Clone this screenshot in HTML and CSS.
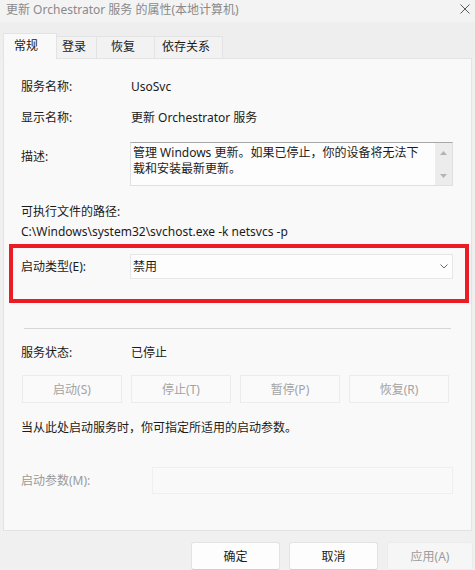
FILE: index.html
```html
<!DOCTYPE html>
<html lang="zh-CN">
<head>
<meta charset="utf-8">
<title>更新 Orchestrator 服务 的属性(本地计算机)</title>
<link rel="stylesheet" href="styles.css">
</head>
<body>
<div class="window">
  <div class="titlebar">
    <span class="title">更新 Orchestrator 服务 的属性(本地计算机)</span>
    <svg class="close" width="10" height="10" viewBox="0 0 10 10"><path d="M0.5 0.5L9.5 9.5M9.5 0.5L0.5 9.5" stroke="#5a5a5a" stroke-width="1" fill="none"/></svg>
  </div>
  <div class="tabstrip">
    <div class="tab active">常规</div>
    <div class="tab t-login">登录</div>
    <div class="tab t-recover">恢复</div>
    <div class="tab t-deps">依存关系</div>
  </div>
  <div class="panel">
    <div class="row r1"><span class="label">服务名称:</span><span class="value">UsoSvc</span></div>
    <div class="row r2"><span class="label">显示名称:</span><span class="value">更新 Orchestrator 服务</span></div>
    <div class="row r3">
      <span class="label desc-label">描述:</span>
      <div class="textbox">
        <div class="tb-text">管理 Windows 更新。如果已停止，你的设备将无法下载和安装最新更新。</div>
        <div class="scrollbar">
          <svg width="7" height="4" viewBox="0 0 7 4"><path d="M3.5 0L7 4H0Z" fill="#b4b4b4"/></svg>
          <svg width="7" height="4" viewBox="0 0 7 4"><path d="M0 0H7L3.5 4Z" fill="#b4b4b4"/></svg>
        </div>
      </div>
    </div>
    <div class="pathlabel">可执行文件的路径:</div>
    <div class="path">C:\Windows\system32\svchost.exe -k netsvcs -p</div>
    <div class="row r-start">
      <span class="label">启动类型(E):</span>
      <div class="select">
        <span>禁用</span>
        <svg width="8" height="5" viewBox="0 0 8 5"><path d="M0.5 0.5L4 4L7.5 0.5" stroke="#6a6a6a" stroke-width="1" fill="none"/></svg>
      </div>
      <div class="highlight"></div>
    </div>
    <div class="separator"></div>
    <div class="row r-status"><span class="label">服务状态:</span><span class="value">已停止</span></div>
    <div class="btnrow">
      <div class="btn disabled">启动(S)</div>
      <div class="btn disabled">停止(T)</div>
      <div class="btn disabled">暂停(P)</div>
      <div class="btn disabled">恢复(R)</div>
    </div>
    <div class="hint">当从此处启动服务时，你可指定所适用的启动参数。</div>
    <div class="row r-params">
      <span class="label dim">启动参数(M):</span>
      <div class="param-input"></div>
    </div>
  </div>
  <div class="footer">
    <div class="fbtn">确定</div>
    <div class="fbtn">取消</div>
    <div class="fbtn disabled">应用(A)</div>
  </div>
</div>
</body>
</html>
```
FILE: styles.css
```css
* { box-sizing: border-box; }
html, body { margin: 0; padding: 0; }
body {
  width: 475px;
  height: 570px;
  overflow: hidden;
  background: #f0f0f0;
  font-family: "Noto Sans", "Noto Sans CJK SC", sans-serif;
  font-size: 12px;
  color: #1b1b1b;
}
.window { width: 475px; height: 570px; display: flex; flex-direction: column; }
.titlebar {
  height: 22px;
  background: #f3f3f3;
  display: flex;
  align-items: center;
  justify-content: space-between;
  padding: 0 5px 4px 6px;
}
.title { color: #8a8a8a; font-size: 12px; }
.tabstrip {
  height: 36px;
  background: #eeeeee;
  display: flex;
  align-items: flex-end;
  padding-left: 3px;
}
.tab {
  height: 22px;
  line-height: 20px;
  border: 1px solid #e3e3e3;
  border-left: none;
  border-bottom: none;
  background: #f2f2f2;
  color: #1b1b1b;
}
.t-login { width: 40px; padding-left: 5px; }
.t-recover { width: 58px; padding-left: 14px; }
.t-deps { width: 68px; padding-left: 7px; }
.tab.active {
  width: 54px;
  height: 26px;
  line-height: 24px;
  padding-left: 10px;
  background: #f9f9f9;
  border: 1px solid #e3e3e3;
  border-bottom: none;
  margin-bottom: -1px;
  position: relative;
  z-index: 1;
}
.panel {
  margin: 0 3px;
  height: 473px;
  background: #f9f9f9;
  border: 1px solid #e3e3e3;
  padding: 20px 0 0 17px;
  display: flex;
  flex-direction: column;
}
.row { display: flex; align-items: center; line-height: 16px; }
.label { width: 110px; flex: none; }
.dim { color: #9a9a9a; }
.r2 { margin-top: 15px; }
.r3 { margin-top: 16px; align-items: flex-start; }
.desc-label { margin-top: 7px; }
.textbox {
  width: 323px;
  height: 44px;
  margin-left: -1px;
  background: #fdfdfd;
  border: 1px solid #e0e0e0;
  border-top: 1px solid #a8a8a8;
  display: flex;
}
.tb-text {
  flex: 1;
  padding: 2px 6px 0 2px;
  line-height: 16px;
}
.scrollbar {
  width: 17px;
  background: #ececec;
  display: flex;
  flex-direction: column;
  align-items: center;
  justify-content: space-between;
  padding: 8px 0 7px;
}
.pathlabel { margin-top: 16px; line-height: 20px; }
.path { line-height: 20px; }
.r-start { margin-top: 12px; position: relative; }
.select {
  width: 323px;
  height: 25px;
  margin-left: -1px;
  background: #fdfdfd;
  border: 1px solid #e6e6e6;
  display: flex;
  align-items: center;
  justify-content: space-between;
  padding: 0 4px 0 2px;
}
.highlight {
  position: absolute;
  left: -12px;
  top: -10px;
  width: 460px;
  height: 59px;
  border: 4px solid #ec1c24;
  pointer-events: none;
}
.separator {
  margin-top: 49px;
  width: 427px;
  margin-left: 3px;
  height: 1px;
  background: #d6d6d6;
}
.r-status { margin-top: 16px; }
.btnrow { display: flex; gap: 9px; margin-top: 14px; margin-left: 1px; }
.btn {
  width: 100px;
  height: 28px;
  border: 1px solid #ececec;
  background: #fafafa;
  display: flex;
  align-items: center;
  justify-content: center;
}
.btn.disabled { color: #a3a3a3; }
.hint { margin-top: 17px; line-height: 16px; }
.r-params { margin-top: 31px; }
.param-input {
  width: 301px;
  height: 27px;
  margin-left: 21px;
  border: 1px solid #efefef;
  background: #f9f9f9;
}
.footer {
  display: flex;
  gap: 9px;
  padding-top: 11px;
  padding-left: 191px;
}
.fbtn {
  width: 89px;
  height: 28px;
  flex: none;
  background: #fdfdfd;
  border: 1px solid #e3e3e3;
  border-bottom-color: #cfcfcf;
  border-radius: 3px;
  display: flex;
  align-items: center;
  justify-content: center;
  color: #1b1b1b;
}
.fbtn.disabled { width: 86px; background: #f6f6f6; color: #9c9c9c; border-color: #ececec; }
```
